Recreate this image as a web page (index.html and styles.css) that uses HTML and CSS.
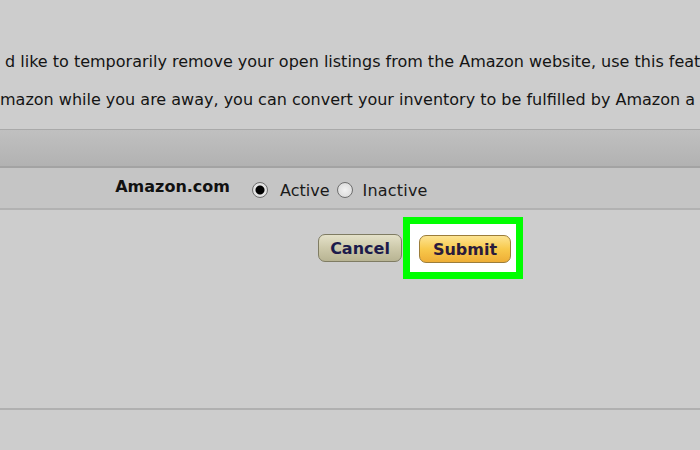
FILE: index.html
```html
<!DOCTYPE html>
<html lang="en">
<head>
    <meta charset="UTF-8">
    <meta name="viewport" content="width=device-width, initial-scale=1.0">
    <title>Listing Status</title>
    <link rel="stylesheet" href="styles.css">
</head>
<body>
    <div class="intro">
        <p>d like to temporarily remove your open listings from the Amazon website, use this feat</p>
        <p>mazon while you are away, you can convert your inventory to be fulfilled by Amazon a</p>
    </div>

    <div class="table-head"></div>

    <div class="status-row">
        <div class="status-label">Amazon.com</div>
        <div class="status-options">
            <label class="option"><input type="radio" name="status" checked> Active</label>
            <label class="option"><input type="radio" name="status"> Inactive</label>
        </div>
    </div>

    <div class="actions">
        <button class="btn btn-cancel">Cancel</button>
        <div class="highlight">
            <button class="btn btn-submit">Submit</button>
        </div>
    </div>
</body>
</html>
```

FILE: styles.css
```css
body {
    margin: 0;
    background-color: #cdcdcd;
    font-family: Verdana, 'DejaVu Sans', sans-serif;
    color: #141414;
    overflow: hidden;
}
.intro {
    padding: 43px 0 0 5px;
    margin-bottom: 10px;
    white-space: nowrap;
}
.intro p {
    margin: 0;
    font-size: 16px;
    line-height: 38px;
}
.intro p + p {
    margin-left: -5px;
}
.table-head {
    height: 36px;
    border-top: 1px solid #a9a9a9;
    border-bottom: 2px solid #a3a3a3;
    background: linear-gradient(#c0c0c0, #b2b2b2);
}
.status-row {
    display: flex;
    height: 40px;
    background-color: #c5c5c5;
    border-bottom: 2px solid #b2b2b2;
}
.status-label {
    width: 230px;
    padding-right: 6px;
    text-align: right;
    font-weight: bold;
    font-size: 16px;
    line-height: 38px;
    color: #111;
}
.status-options {
    display: flex;
    align-items: center;
    padding: 4px 0 0 16px;
    font-size: 16px;
    color: #1a1a1a;
}
.option {
    display: flex;
    align-items: center;
    margin-right: 7px;
}
.option input {
    appearance: none;
    -webkit-appearance: none;
    width: 16px;
    height: 16px;
    margin: 0 12px 0 0;
    border: 1px solid #6e6e6e;
    border-radius: 50%;
    background: radial-gradient(circle, #f2f2f2, #d6d6d6);
}
.option input:checked {
    background: radial-gradient(circle, #000 0, #000 4px, #e8e8e8 5px, #d6d6d6 8px);
}
.option + .option input {
    margin-right: 10px;
}
.option + .option {
    letter-spacing: 0.2px;
}
.actions {
    display: flex;
    align-items: flex-start;
    justify-content: flex-end;
    padding: 7px 177px 0 0;
    height: 191px;
    border-bottom: 2px solid #b0b0b0;
}
.btn-cancel {
    margin: 17px 1px 0 0;
}
.highlight {
    border: 7px solid #00ff00;
    background-color: #fff;
    padding: 11px 5px 9px 9px;
}
.btn {
    height: 28px;
    border-radius: 7px;
    font-family: Verdana, 'DejaVu Sans', sans-serif;
    font-weight: bold;
    font-size: 16px;
    padding: 0;
    cursor: pointer;
}
.btn-cancel {
    width: 84px;
    color: #1c1b4b;
    border: 1px solid #7f7c63;
    background: linear-gradient(#e4e1c9, #cdc9aa 50%, #b8b493);
}
.btn-submit {
    width: 92px;
    color: #2a1b3c;
    border: 1px solid #9c7d3a;
    background: linear-gradient(#fde492, #f8c94c 50%, #eeae36);
}
```
